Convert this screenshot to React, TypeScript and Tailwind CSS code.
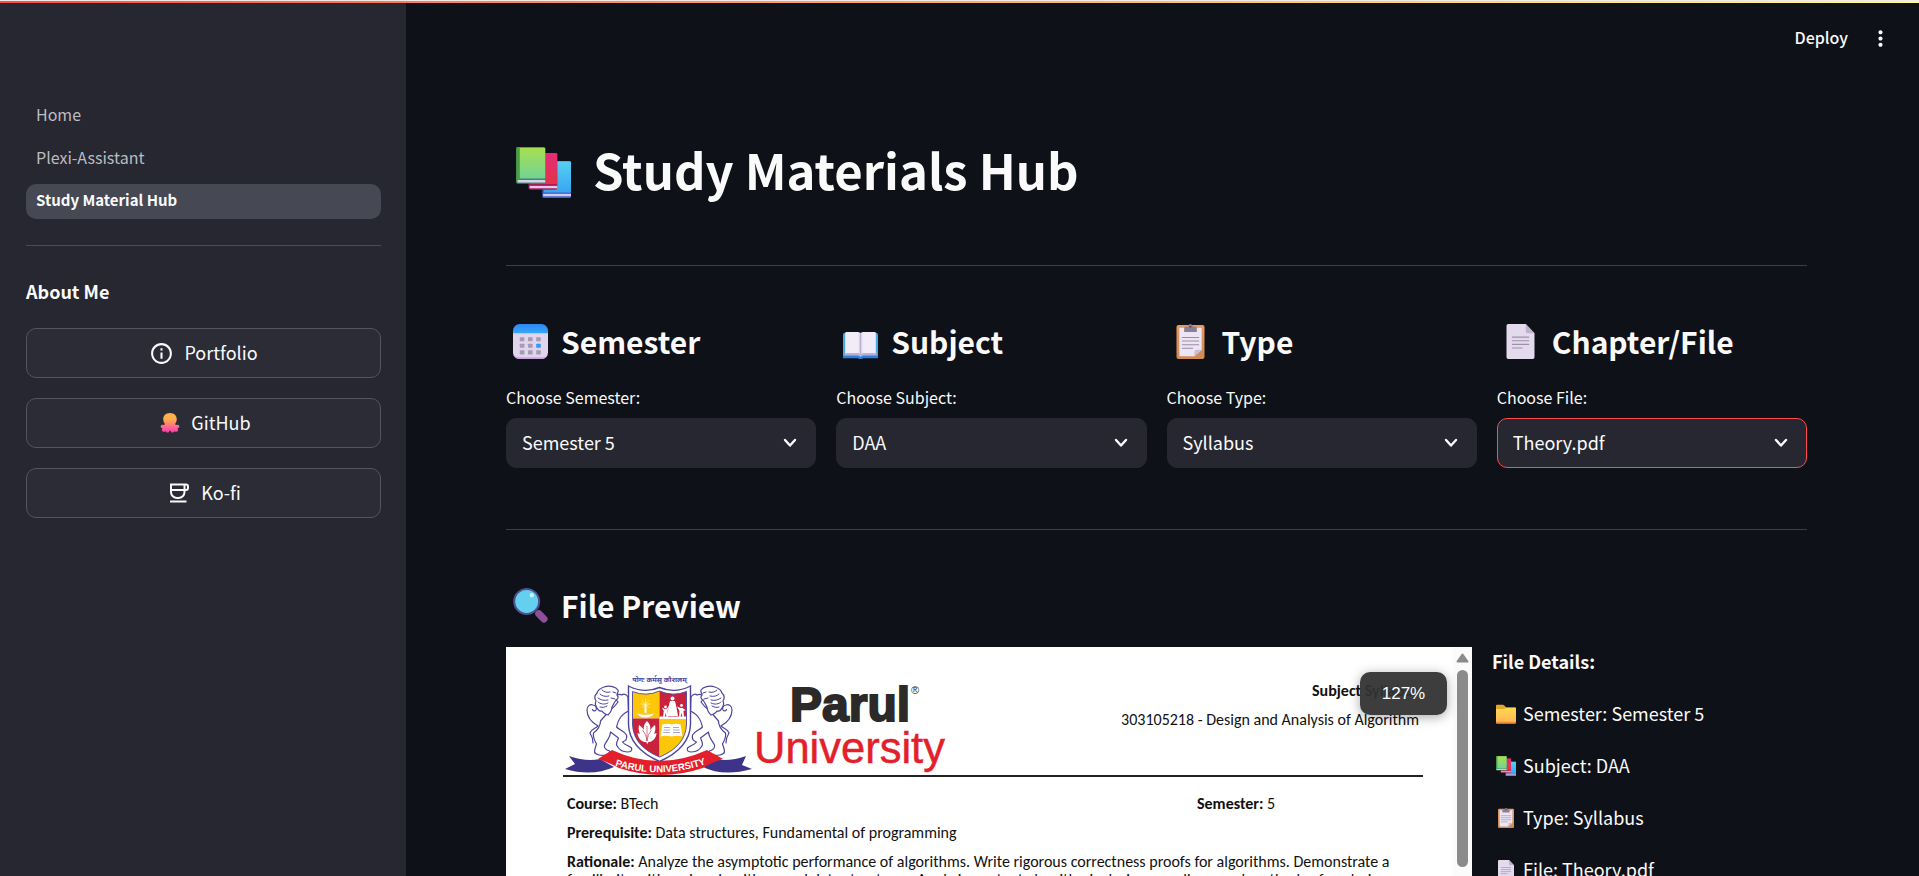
import type { ReactNode } from "react";
import { MdInfoOutline, MdMoreVert } from "react-icons/md";

type EmojiName = "books" | "calendar" | "book" | "clipboard" | "page" | "lens" | "folder" | "octopus";

const drawings: Record<EmojiName, ReactNode> = {
  books: (
    <>
      <rect x="15.3" y="9" width="16.7" height="23" rx="1" fill="#3f63c9" />
      <rect x="16.3" y="9" width="15.7" height="19.6" rx="0.8" fill="url(#bookBlue)" />
      <rect x="15.8" y="29.4" width="16.2" height="1.5" fill="#d6c8ee" />
      <rect x="7.3" y="3.8" width="16.7" height="23" rx="1" fill="#a51d55" />
      <rect x="8.3" y="3.8" width="15.7" height="19.4" rx="0.8" fill="url(#bookRed)" />
      <rect x="7.9" y="24.4" width="16.1" height="1.5" fill="#e6c6ea" />
      <rect x="0" y="0" width="17" height="23" rx="1" fill="#3b8a5e" />
      <rect x="0.3" y="0" width="2" height="20.5" rx="0.8" fill="#4c9d3f" />
      <rect x="2.2" y="0.4" width="14.8" height="19.4" rx="0.5" fill="url(#bookGreen)" />
      <rect x="0.9" y="20.7" width="16.1" height="1.6" fill="#d9d0f0" />
    </>
  ),
  calendar: (
    <>
      <path d="M0 8h32v18a6 6 0 0 1-6 6H6a6 6 0 0 1-6-6z" fill="#e1d5ee" />
      <path d="M0 27.5a6 6 0 0 0 6 4.5h20a6 6 0 0 0 6-4.5c-1 2-3 3-6 3H6c-3 0-5-1-6-3z" fill="#c9a6dc" />
      <path d="M0 8.4V6a6 6 0 0 1 6-6h20a6 6 0 0 1 6 6v2.4z" fill="url(#calTop)" />
      {[12, 18, 24].map((y) =>
        [6.2, 13.7, 21.2].map((x) => (
          <rect key={`${x}-${y}`} x={x} y={y} width="4.2" height="3.8" rx="0.4" fill={y === 18 && x > 20 ? "#2f9bf5" : "#a79bb4"} />
        )),
      )}
    </>
  ),
  book: (
    <>
      <path d="M0 10q0-2 2-2h28q2 0 2 2v21H18l-2 1-2-1H0z" fill="#4aa8e6" />
      <path d="M0 29h13.5l2.5 1 2.5-1H32v2.3H18.3L16 32.400l-2.300-1.100H0z" fill="#2b7fe0" />
      <path d="M1.5 26h29v2.6H18.5L16 30l-2.5-1.400h-12z" fill="#b9b1d6" />
      <path d="M2 8.5q0-1.200 1.200-1.200h10.300q2 0 2.500 1.400.5-1.400 2.500-1.400h10.300q1.200 0 1.200 1.200V26.600H18.500q-2 0-2.500 1.400-.5-1.400-2.500-1.400H2z" fill="#f1ecf8" />
      <path d="M16 8.5V28" stroke="#b5aacb" strokeWidth="0.9" />
      <path d="M15 8.4V26.800M17 8.400V26.800" stroke="#dcd3ea" strokeWidth="1.2" />
    </>
  ),
  clipboard: (
    <>
      <rect x="3.2" y="1" width="25.6" height="31" rx="1.8" fill="url(#board)" />
      <path d="M5.8 3.5h20.4V23.500L19.500 29.500H5.800z" fill="#ece6f4" />
      <path d="M26.2 23.5h-4.700q-2 0-2 2v4z" fill="#c9bddb" />
      <path d="M10.2 3.8q0-1.300 1.300-1.300h2.200Q14.200 0 16 0t2.300 2.500h2.200q1.300 0 1.300 1.300v3.400H10.200z" fill="#8b7f93" />
      <circle cx="16" cy="2.6" r="0.9" fill="#5c4a52" />
      <path d="M8.5 12.3h15M8.500 15.600h15M8.500 18.900h15M8.500 22.200h9.500" stroke="#998da6" strokeWidth="1" strokeLinecap="round" />
    </>
  ),
  page: (
    <>
      <path d="M3.2 1.6Q3.200 0 4.800 0h16l8 8.400v22q0 1.600-1.600 1.600H4.800q-1.600 0-1.600-1.600z" fill="#e4daee" />
      <path d="M20.8 0l8 8.400h-6q-2 0-2-2z" fill="#bfb2cd" />
      <path d="M8.5 12h15M8.500 15.300h15M8.500 18.600h15M8.500 21.900h9" stroke="#9d91aa" strokeWidth="1" strokeLinecap="round" />
    </>
  ),
  lens: (
    <>
      <path d="M21.5 21.5l4 4" stroke="#4a4a8a" strokeWidth="3" />
      <path d="M23.6 23.6l4.700 4.700" stroke="#8d4f9c" strokeWidth="6.6" strokeLinecap="round" />
      <circle cx="12.5" cy="12.3" r="11.4" fill="#62d0ee" stroke="#51508f" strokeWidth="1.9" />
      <circle cx="17.2" cy="6.6" r="2" fill="#c9f1fb" />
    </>
  ),
  folder: (
    <>
      <path d="M0 2.5Q0 1 1.500 1h9.500q1 0 1.800.8L16 5h14.500Q32 5 32 6.500V16H0z" fill="#e5a62d" />
      <path d="M0 9q0-1.200 1.200-1.200H13L16 6.300h14.800Q32 6.300 32 7.500V29.500Q32 31 30.500 31h-29Q0 31 0 29.500z" fill="url(#folder)" />
      <path d="M0 28.5h32v1.200Q32 31 30.500 31h-29Q0 31 0 29.500z" fill="#e8913c" />
    </>
  ),
  octopus: (
    <path
      d="M16 0C9 0 5.200 4.600 5.200 10c0 3 1.200 5 2.300 6.800.5 1.500-.3 2.700-2 2.200-1.700-.6-3.500 0-4.300 1.600-.8 1.900.7 3.600 3 3.700-1.700 1.400-1.700 4.200.2 5.300 1.800 1 3.200.2 4.600-.6.600 2 3.200 3.200 5 1.700L16 27.500l2 3.200c1.800 1.500 4.400.3 5-1.700 1.400.8 2.800 1.600 4.600.6 1.900-1.100 1.900-3.900.2-5.300 2.300-.1 3.800-1.800 3-3.700-.8-1.600-2.600-2.200-4.300-1.600-1.700.5-2.500-.7-2-2.200C25.600 15 26.800 13 26.800 10 26.800 4.600 23 0 16 0z"
      fill="url(#octo)"
    />
  ),
};

function Gradients() {
  const defs: [string, string, string][] = [
    ["bookGreen", "#a7e04f", "#72d396"],
    ["bookRed", "#e42b74", "#e0354c"],
    ["bookBlue", "#56d0f4", "#38a5f0"],
    ["board", "#e59a5f", "#cf8a55"],
    ["folder", "#ffd84f", "#ffb353"],
    ["octo", "#ffb04d", "#ff35b4"],
    ["calTop", "#2f86f0", "#34a8ff"],
  ];
  return (
    <svg aria-hidden="true" className="absolute h-0 w-0">
      <defs>
        {defs.map(([id, from, to]) => (
          <linearGradient key={id} id={id} x1="0" y1="0" x2="0" y2="1">
            <stop offset={id === "octo" ? "0.3" : "0"} stopColor={from} />
            <stop offset="1" stopColor={to} />
          </linearGradient>
        ))}
      </defs>
    </svg>
  );
}

function Emoji({ name, className }: { name: EmojiName; className: string }) {
  return (
    <svg viewBox="0 0 32 32" preserveAspectRatio="none" aria-hidden="true" className={className}>
      {drawings[name]}
    </svg>
  );
}

function CupIcon() {
  return (
    <svg viewBox="0 0 20 20" aria-hidden="true" className="size-5" fill="none" stroke="currentColor" strokeWidth="2">
      <path d="M1 1.500h16a2 2 0 0 1 2 2V5a2 2 0 0 1-2 2H2M2 1.500V9a6 6 0 0 0 6 6h1.500a6 6 0 0 0 6-6V1.500" />
      <path d="M1 18.500h16.500" />
    </svg>
  );
}

function Lion() {
  return (
    <g fill="#fff" stroke="#4d459c" strokeWidth="1.2" strokeLinejoin="round" strokeLinecap="round">
      <path d="M38 56c-7-4-11-9-11-16 0-4 3-6 6-5 3 .500 4 3 3 5-1 1.500-3 1-3.500-.500M38 56c-3 3-7 3-8 7 2 3 3 6 3 10" fill="none" />
      <path d="M50 40c3-2 6-5 8-8-2-2-3-5-1-7 2-1 3-1 5 0 2-2 5 0 6 2l.500 14c-4 2-7 4-9 8-2 3-2 5-3 8 3 3 8 4 10 8 1 4-1 6-4 7 2 3 7 4 9 6 1 3-1 4-4 4-5 0-9-3-11-7 0-3 1-5 2-7l-8-6c0 5-4 9-6 13-1 3 2 5 5 6 1 2 0 4-2 4-6 1-12 0-13-3 0-3 1-5 2-8-2-4-4-7-3-11 4-3 7-7 7-12z" />
      <path d="M44 17c6-2 12 0 14 3 1 2-1 3-1 5 2 2 1 4-1 5-2 3-3 5-4 7 0 3-2 6-4 8-3-1-5-2-6-4-3 1-4-1-5-3-2-3-2-5-1-7-2-3-1-6 1-8 1-3 4-5 7-6z" />
      <path d="M42 20c2 2 5 3 8 2M40 24c2 2 5 3 9 2M38 28c3 2 6 3 10 2M38 32c2 2 6 3 10 1M40 37c3 1 5 0 7-1M53 22l3 1M51 28l4 1" fill="none" strokeWidth="1" />
    </g>
  );
}

function UniversityLogo() {
  return (
    <svg viewBox="3 0 387 105" role="img" aria-label="Parul University" className="h-[105px] w-[387px]">
      <text x="99.5" y="12" textAnchor="middle" fontSize="7" fontWeight="700" fill="#4d459c" className="font-['Noto_Sans',sans-serif]">
        योगः कर्मसु कौशलम्
      </text>
      <Lion />
      <g transform="translate(199 0) scale(-1 1)">
        <Lion />
      </g>
      <path d="M68.5 16Q84 24 99.500 17.500 115 24 130.500 16V54Q130 78 99.500 91.500 69 78 68.500 54z" fill="#fff" stroke="#4d459c" strokeWidth="1.4" />
      <clipPath id="shield">
        <path d="M72.5 21.500Q86 27 99.500 21 113 27 126.500 21.500V54Q126 76 99.500 87 73 76 72.500 54z" />
      </clipPath>
      <g clipPath="url(#shield)">
        <path d="M72 20h27.500v28.500H72z" fill="#fdc609" />
        <path d="M99.500 20H128v28.500H99.500z" fill="#c9223c" />
        <path d="M72 48.500h27.500V90H72z" fill="#c9223c" />
        <path d="M99.500 48.500H128V90H99.500z" fill="#fdc609" />
        <path d="M99.500 46.500h28v2.500h-28z" fill="#fff" />
      </g>
      <path d="M72.500 21.500Q86 27 99.500 21 113 27 126.500 21.500V54Q126 76 99.500 87 73 76 72.500 54z" fill="none" stroke="#4d459c" strokeWidth="0.9" />
      <path d="M77 43.500q8.500 2.500 17 0-2.500 4-8.500 4t-8.500-4zM84.500 34h2v9h-2z" fill="#fff" />
      <path d="M85.500 29v10M80.500 34h10M82 30.500l7 7M89 30.500l-7 7" stroke="#fff3b0" strokeWidth="0.7" />
      <g fill="#fff">
        <circle cx="112.5" cy="28.5" r="2" />
        <path d="M110 31h5l1.500 6.500L118 46h-11l1.500-9z" />
        <circle cx="105.5" cy="37" r="1.4" />
        <path d="M102 37.500l2.500 1.500h2l2.500-3-1.500 5 .5 6h-1.500l-.8-4-1 4H103l.8-6z" />
        <circle cx="121.5" cy="35.5" r="1.4" />
        <path d="M117 36.500l3.500 1.500h2l3 2-2 1 .5 6h-1.500l-1-4-1 4H119l.5-6z" />
        <path d="M87 51c3 3 4 6 3 9 2-2 3-4 5-5 1 4 0 7-1 9l2.500-1c0 5-4 9-8.500 9.200l-.8 2.300-.8-2.300c-5-.2-8.700-4.200-8.900-9.200l2.500 1c-1-2-2-5-1-9 2 1 3.500 3 5 5-1-3 0-6 3-9z" />
        <path d="M102.500 54.500q4.500-1.500 9 0 4.500-1.500 9 0l2 12q-5-1.500-11 0-6-1.500-11 0z" />
      </g>
      <path d="M87 56v15M82.500 60q4 4 4.500 11M91.500 60q-4 4-4.500 11" stroke="#c9223c" strokeWidth="0.6" fill="none" />
      <path d="M104 57.500h6M103.700 60h6.300M103.300 62.500h6.700M113 57.500h6M113 60h6.500M113 62.500h7" stroke="#9a8fb8" strokeWidth="0.8" />
      <path d="M9 86q17 6 31 3l14 8q-22 10-49 2l10-5z" fill="#3d3489" />
      <path d="M186 86q-16 6-33 3l-10 8q20 10 49 2l-10-4z" fill="#3d3489" />
      <path d="M38 89l14-9q47 22 95 0l16 9q-13 4-20 9-42 14-84 0-9-5-21-9z" fill="#e31f2b" />
      <path id="ribbonArc" d="M50 94Q99 111 151 92.500" fill="none" />
      <text fontSize="9.6" fontWeight="700" fill="#fff" className="font-['Liberation_Sans',Arial,sans-serif]">
        <textPath href="#ribbonArc" startOffset="50%" textAnchor="middle">
          PARUL UNIVERSITY
        </textPath>
      </text>
      <text x="230" y="51" fontSize="48" fontWeight="700" fill="#2b2a29" stroke="#2b2a29" strokeWidth="2" className="font-['Liberation_Sans',Arial,sans-serif]">
        Parul
      </text>
      <text x="351" y="24" fontSize="11" fill="#2b2a29" className="font-['Liberation_Sans',Arial,sans-serif]">
        ®
      </text>
      <text x="194" y="93" fontSize="43.5" fill="#e31f2b" stroke="#e31f2b" strokeWidth="0.5" className="font-['Liberation_Sans',Arial,sans-serif]">
        University
      </text>
    </svg>
  );
}

const selectors: { icon: EmojiName; title: string; label: string; id: string; value: string; active?: boolean }[] = [
  { icon: "calendar", title: "Semester", label: "Choose Semester:", id: "semester", value: "Semester 5" },
  { icon: "book", title: "Subject", label: "Choose Subject:", id: "subject", value: "DAA" },
  { icon: "clipboard", title: "Type", label: "Choose Type:", id: "type", value: "Syllabus" },
  { icon: "page", title: "Chapter/File", label: "Choose File:", id: "file", value: "Theory.pdf", active: true },
];

const details: { icon: EmojiName; text: string }[] = [
  { icon: "folder", text: "Semester: Semester 5" },
  { icon: "books", text: "Subject: DAA" },
  { icon: "clipboard", text: "Type: Syllabus" },
  { icon: "page", text: "File: Theory.pdf" },
];

const navLink = "flex h-[35px] items-center rounded-[10px] px-[10px] pb-1 leading-6";
const sideButton =
  "flex h-[50px] items-center justify-center rounded-[10px] border border-[#53545c] bg-[#2b2c36] text-lg leading-7";

function SideButton({ href, icon, label, iconBox }: { href: string; icon: ReactNode; label: string; iconBox: string }) {
  return (
    <a href={href} className={sideButton}>
      <span className={`flex justify-center ${iconBox}`}>{icon}</span>
      <span className="pb-[3px]">{label}</span>
    </a>
  );
}

function Sidebar() {
  return (
    <aside className="w-[406px] shrink-0 bg-[#262730] pt-[98px] pr-[25px] pl-[26px]">
      <nav className="flex flex-col gap-2 text-[#bcbdc2]">
        <a href="#home" className={`${navLink} text-base`}>Home</a>
        <a href="#assistant" className={`${navLink} text-base`}>Plexi-Assistant</a>
        <a href="#hub" aria-current="page" className={`${navLink} bg-[#464853] text-[15px] font-bold text-[#fafafa]`}>
          Study Material Hub
        </a>
      </nav>
      <hr className="mt-[26px] border-[#4b4c54]" />
      <h2 className="mt-[31px] text-lg leading-7 font-bold">About Me</h2>
      <div className="mt-[23px] flex flex-col gap-5">
        <SideButton href="#portfolio" icon={<MdInfoOutline className="size-[25px]" />} label="Portfolio" iconBox="mr-2.5 w-[25px]" />
        <SideButton href="#github" icon={<Emoji name="octopus" className="size-5" />} label="GitHub" iconBox="mr-2 w-[27px]" />
        <SideButton href="#kofi" icon={<CupIcon />} label="Ko-fi" iconBox="mr-2.5 w-[25px]" />
      </div>
    </aside>
  );
}

function Preview() {
  return (
    <section aria-label="Document" className="relative flex h-[800px] bg-white font-['Carlito',Calibri,sans-serif] text-base text-[#111]">
      <div className="min-w-0 flex-1 pt-[23px] pr-[30px] pl-[57px]">
        <header className="flex justify-between border-b-2 border-[#222]">
          <UniversityLogo />
          <div className="pt-1.5 pr-1 text-right leading-[29px]">
            <p className="font-bold">Subject Syllabus</p>
            <p>303105218 - Design and Analysis of Algorithm</p>
          </div>
        </header>
        <div className="pt-3 pl-1 leading-[29px]">
          <div className="grid grid-cols-[630fr_226fr]">
            <p><b>Course:</b> BTech</p>
            <p><b>Semester:</b> 5</p>
          </div>
          <p><b>Prerequisite:</b> Data structures, Fundamental of programming</p>
          <p className="pt-1.5 leading-[18px]">
            <b>Rationale:</b> Analyze the asymptotic performance of algorithms. Write rigorous correctness proofs for algorithms. Demonstrate a
            familiarity with major algorithms and data structures. Apply important algorithmic design paradigms and methods of analysis.
          </p>
        </div>
      </div>
      <div aria-hidden="true" className="flex w-[19px] flex-col items-center gap-[7px] bg-[#fbfbfb] pt-1.5">
        <svg viewBox="0 0 13 10" className="h-2.5 w-[13px]">
          <path d="M6.500 1.500l5 7h-10z" fill="#8b8b8b" stroke="#8b8b8b" strokeWidth="2" strokeLinejoin="round" />
        </svg>
        <div className="h-[197px] w-[11px] rounded-full bg-[#8b8b8b]" />
      </div>
      <div className="absolute top-[25px] right-[25px] flex h-[43px] w-[87px] items-center justify-center rounded-[10px] bg-[#333333]/95 font-['Liberation_Sans',Arial,sans-serif] text-[17px] font-medium text-white shadow-[0_2px_12px_rgba(0,0,0,0.35)]">
        127%
      </div>
    </section>
  );
}

export default function App() {
  return (
    <div className="relative flex h-screen overflow-hidden bg-[#0e1117] font-['Noto_Sans_CJK_JP','Noto_Sans_CJK_SC',sans-serif] text-[#fafafa]">
      <Gradients />
      <div className="absolute inset-x-0 top-0 h-[3px] border-t border-[#efe9ea] bg-linear-to-r from-[#ff4b4b] to-[#fffd80]" />
      <Sidebar />
      <div className="relative min-w-0 flex-1">
        <header className="absolute top-[25px] right-[26px] flex items-center gap-5">
          <button type="button" className="pb-0.5 text-base leading-6 font-medium">Deploy</button>
          <button type="button" aria-label="Main menu">
            <MdMoreVert className="size-[25px]" />
          </button>
        </header>
        <main className="pt-[136px] pr-[112px] pl-[100px]">
          <h1 className="flex items-end gap-3 text-[49px] leading-[66px] font-bold">
            <span className="flex w-[75px] justify-center pb-1">
              <Emoji name="books" className="h-[51px] w-[55px]" />
            </span>
            Study Materials Hub
          </h1>
          <hr className="mt-[63px] border-[#3b3e44]" />
          <div className="mt-[54px] grid grid-cols-4 gap-5">
            {selectors.map((s) => (
              <section key={s.id}>
                <h2 className="flex items-end gap-[7px] text-[30px] leading-[42px] font-bold">
                  <span className="flex w-12 justify-center pb-[3px]">
                    <Emoji name={s.icon} className="size-[35px]" />
                  </span>
                  {s.title}
                </h2>
                <label htmlFor={s.id} className="mt-[23px] block text-base leading-6">{s.label}</label>
                <div className="relative mt-[9px]">
                  <select
                    id={s.id}
                    className={`h-[50px] w-full appearance-none rounded-[10px] border bg-[#262730] pr-10 pb-[3px] pl-[15px] text-lg leading-7 ${s.active ? "border-[#ff4b4b]" : "border-[#262730]"}`}
                  >
                    <option>{s.value}</option>
                  </select>
                  <svg viewBox="0 0 14 10" aria-hidden="true" className="pointer-events-none absolute top-5 right-[19px] h-2.5 w-3.5">
                    <path d="M2 2l5 5.500L12 2" fill="none" stroke="#fafafa" strokeWidth="2.4" strokeLinecap="round" strokeLinejoin="round" />
                  </svg>
                </div>
              </section>
            ))}
          </div>
          <hr className="mt-[61px] border-[#3b3e44]" />
          <h2 className="mt-[54px] flex items-end gap-[7px] text-[30px] leading-[42px] font-bold">
            <span className="flex w-12 justify-center pb-[3px]">
              <Emoji name="lens" className="size-[35px]" />
            </span>
            File Preview
          </h2>
          <div className="mt-[21px] grid grid-cols-[966fr_315fr] gap-5">
            <Preview />
            <section className="flex flex-col gap-6 text-lg leading-7">
              <h3 className="font-bold">File Details:</h3>
              {details.map((d) => (
                <p key={d.text} className="flex items-end gap-1">
                  <span className="flex w-[27px] justify-center pb-[3px]">
                    <Emoji name={d.icon} className="size-5" />
                  </span>
                  {d.text}
                </p>
              ))}
            </section>
          </div>
        </main>
      </div>
    </div>
  );
}
